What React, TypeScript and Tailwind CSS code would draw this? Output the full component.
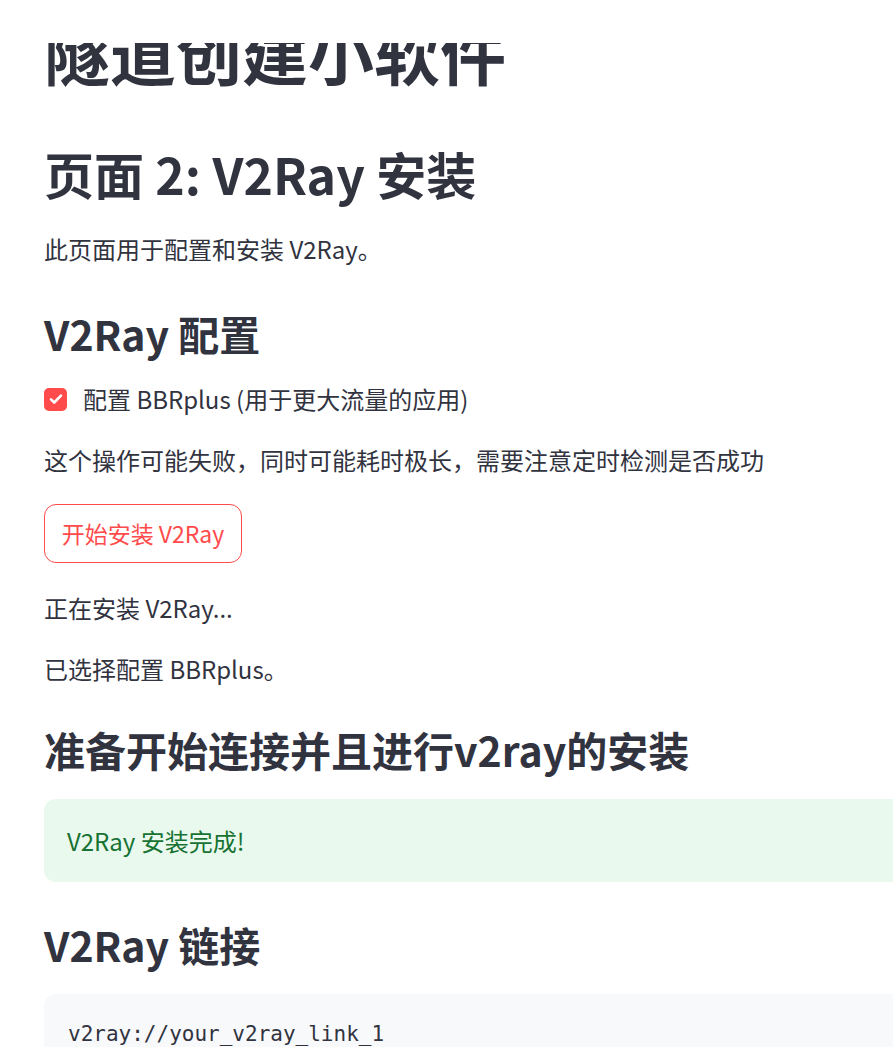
import React from "react";

const sans = { fontFamily: '"Noto Sans CJK SC", "Noto Sans", sans-serif' };

export default function App() {
  return (
    <div className="relative w-full h-[1047px] overflow-hidden bg-white text-[#31333f]" style={sans}>
      <div className="absolute left-0 top-0 z-10 h-[43px] w-full bg-white" />
      <div className="flex w-[1100px] flex-col pl-[44px]">
        <h1 className="mt-[11px] flex h-[80px] items-center text-[66px] font-bold leading-none">隧道创建小软件</h1>
        <h2 className="mt-[49px] flex h-[66px] items-center text-[50px] font-semibold leading-none">页面 2: V2Ray 安装</h2>
        <p className="mt-[24px] flex h-[38px] items-center text-[24px] leading-none">此页面用于配置和安装 V2Ray。</p>
        <h3 className="mt-[45px] flex h-[40px] items-center text-[41px] font-semibold leading-none">V2Ray 配置</h3>
        <label className="mt-[27px] flex h-[38px] items-center gap-[16px] text-[24px] leading-none">
          <span className="flex h-[23px] w-[23px] items-center justify-center rounded-[5px] bg-[#ff4b4b]">
            <svg width="16" height="16" viewBox="0 0 16 16" fill="none">
              <path d="M3 8.3l3.2 3.2L13 4.7" stroke="white" strokeWidth="2.6" strokeLinecap="round" strokeLinejoin="round" />
            </svg>
          </span>
          <span>配置 BBRplus (用于更大流量的应用)</span>
        </label>
        <p className="mt-[23px] flex h-[38px] items-center text-[24px] leading-none">这个操作可能失败，同时可能耗时极长，需要注意定时检测是否成功</p>
        <div className="mt-[25px] flex">
          <button className="flex h-[59px] w-[198px] items-center justify-center rounded-[12px] border border-[#ff4b4b] bg-white text-[23px] leading-none text-[#ff4b4b]">开始安装 V2Ray</button>
        </div>
        <p className="mt-[26px] flex h-[38px] items-center text-[24px] leading-none">正在安装 V2Ray...</p>
        <p className="mt-[23px] flex h-[38px] items-center text-[24px] leading-none">已选择配置 BBRplus。</p>
        <h3 className="mt-[41px] flex h-[40px] items-center text-[41px] font-semibold leading-none">准备开始连接并且进行v2ray的安装</h3>
        <div className="mt-[30px] flex h-[83px] items-center rounded-[12px] bg-[#e9f9ee] pl-[23px] text-[24px] leading-none text-[#177233]">V2Ray 安装完成!</div>
        <h3 className="mt-[42px] flex h-[40px] items-center text-[41px] font-semibold leading-none">V2Ray 链接</h3>
        <div className="mt-[30px] h-[120px] rounded-[12px] bg-[#f8f9fb] pl-[24px] pt-[28px]">
          <code className="text-[21px] leading-[24px] text-[#31333f]" style={{ fontFamily: '"DejaVu Sans Mono", "Liberation Mono", monospace' }}>v2ray://your_v2ray_link_1</code>
        </div>
      </div>
    </div>
  );
}
